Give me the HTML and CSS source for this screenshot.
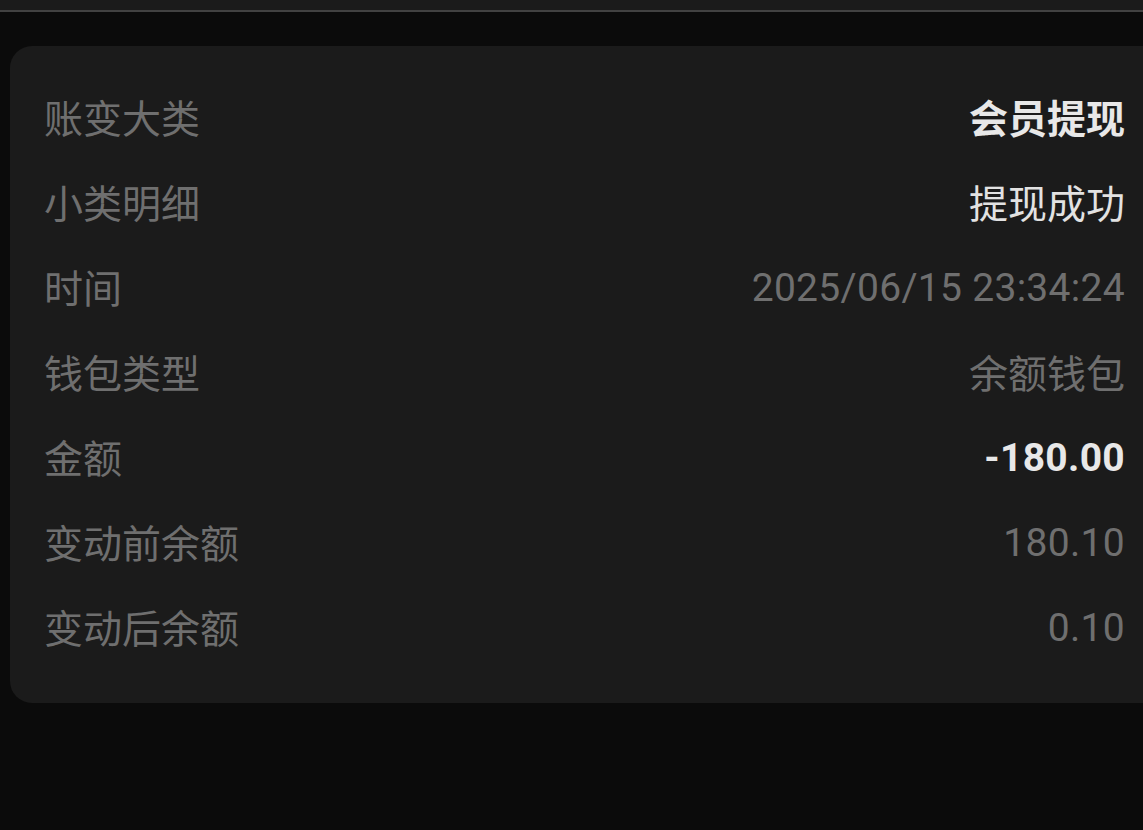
FILE: index.html
```html
<!DOCTYPE html>
<html>
	<head>
		<meta charset="utf-8">
		<title>账变详情</title>
		<link rel="stylesheet" href="styles.css">
	</head>
	<body>
		<div class="topbar"></div>
		<div class="detail">
			<div class="row">
				<span class="label">账变大类</span>
				<span class="value strong">会员提现</span>
			</div>
			<div class="row">
				<span class="label">小类明细</span>
				<span class="value light">提现成功</span>
			</div>
			<div class="row">
				<span class="label">时间</span>
				<span class="value num">2025/06/15 23:34:24</span>
			</div>
			<div class="row">
				<span class="label">钱包类型</span>
				<span class="value">余额钱包</span>
			</div>
			<div class="row">
				<span class="label">金额</span>
				<span class="value num strong">-180.00</span>
			</div>
			<div class="row">
				<span class="label">变动前余额</span>
				<span class="value num">180.10</span>
			</div>
			<div class="row">
				<span class="label">变动后余额</span>
				<span class="value num">0.10</span>
			</div>
		</div>
	</body>
</html>
```

FILE: styles.css
```css
html{
	overflow: hidden;
}
body{
	margin: 0;
	background-color: #0b0b0b;
	font-family: Roboto, "Noto Sans CJK SC", sans-serif;
}

/* 顶部条 */
.topbar{
	height: 10px;
	background-color: #1b1b1b;
	border-bottom: 2px solid #424242;
}

/* 详情卡片 右边超出屏幕 */
.detail{
	margin: 34px -24px 0 10px;
	padding: 27px 42px 35px 34px;
	background-color: #1b1b1b;
	border-radius: 22px;
}
.row{
	display: flex;
	justify-content: space-between;
	align-items: center;
	height: 85px;
	font-size: 39px;
}
.label{
	color: #6f6f6f;
}
.value{
	color: #6f6f6f;
}
/* 数字比汉字偏上 往下挪一点 */
.value.num{
	padding-top: 5px;
	letter-spacing: 0.3px;
}
.value.light{
	color: #e2e2e2;
}
.value.strong{
	color: #e8e8e8;
	font-weight: 700;
}
```
